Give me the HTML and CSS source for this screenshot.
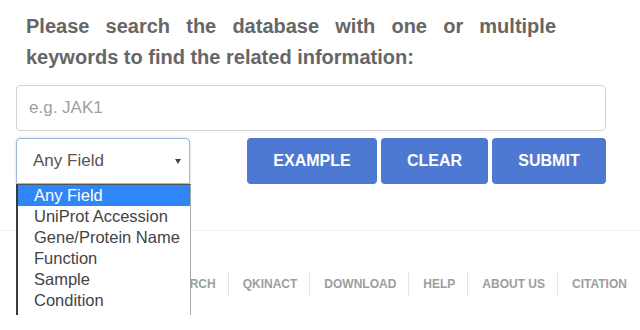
FILE: index.html
```html
<!DOCTYPE html>
<html lang="en">
<head>
<meta charset="utf-8">
<title>Search</title>
<link rel="stylesheet" href="styles.css">
</head>
<body>
<div class="panel">
  <p class="intro">Please search the database with one or multiple keywords to find the related information:</p>
  <input class="query" type="text" placeholder="e.g. JAK1">
  <div class="controls">
    <div class="select-wrap">
      <div class="select">Any Field<span class="caret"></span></div>
      <ul class="options">
        <li class="active">Any Field</li>
        <li>UniProt Accession</li>
        <li>Gene/Protein Name</li>
        <li>Function</li>
        <li>Sample</li>
        <li>Condition</li>
      </ul>
    </div>
    <div class="buttons">
      <button class="btn btn-example">EXAMPLE</button>
      <button class="btn btn-clear">CLEAR</button>
      <button class="btn btn-submit">SUBMIT</button>
    </div>
  </div>
</div>
<div class="footer">
  <nav class="nav">
    <a class="nav-item">HOME</a>
    <a class="nav-item">SEARCH</a>
    <a class="nav-item">QKINACT</a>
    <a class="nav-item">DOWNLOAD</a>
    <a class="nav-item">HELP</a>
    <a class="nav-item">ABOUT US</a>
    <a class="nav-item">CITATION</a>
  </nav>
</div>
</body>
</html>
```
FILE: styles.css
```css
html, body {
  margin: 0;
  padding: 0;
  background: #ffffff;
  overflow: hidden;
}
body {
  font-family: "Liberation Sans", Arial, sans-serif;
  width: 640px;
  height: 330px;
}
.panel {
  padding: 11px 34px 0 16px;
}
.intro {
  margin: 0 50px 0 10px;
  font-size: 20px;
  font-weight: bold;
  line-height: 31px;
  color: #666666;
  text-align: justify;
}
.query {
  display: block;
  box-sizing: border-box;
  width: 590px;
  height: 46px;
  margin-top: 12px;
  padding: 0 12px;
  border: 1px solid #d4d4d4;
  border-radius: 4px;
  font-family: "Liberation Sans", Arial, sans-serif;
  font-size: 17px;
  color: #555;
  outline: none;
}
.query::placeholder {
  color: #a0a0a0;
}
.controls {
  display: flex;
  margin-top: 7px;
}
.select-wrap {
  position: relative;
  width: 174px;
}
.select {
  box-sizing: border-box;
  height: 46px;
  padding-left: 16px;
  border: 1px solid #9fb6d6;
  border-radius: 4px 4px 0 0;
  box-shadow: 0 0 3px rgba(102, 140, 200, 0.35);
  font-size: 17px;
  line-height: 44px;
  color: #555555;
  display: flex;
  align-items: center;
  justify-content: space-between;
  padding-right: 8px;
}
.caret {
  width: 0;
  height: 0;
  border-left: 3px solid transparent;
  border-right: 3px solid transparent;
  border-top: 5px solid #444;
}
.options {
  position: absolute;
  top: 46px;
  left: 0;
  z-index: 5;
  box-sizing: border-box;
  width: 175px;
  margin: 0;
  padding: 0 0 4px 0;
  list-style: none;
  background: #ffffff;
  border-top: 1px solid #555;
  border-left: 2px solid #3a3a3a;
  border-right: 1px solid #a8a8a8;
}
.options li {
  height: 21px;
  line-height: 21px;
  padding-left: 16px;
  font-size: 16.5px;
  color: #444444;
  white-space: nowrap;
}
.options li.active {
  background: #2f86f6;
  color: #ffffff;
}
.buttons {
  display: flex;
  gap: 4px;
  margin-left: 57px;
}
.btn {
  height: 46px;
  border: none;
  border-radius: 4px;
  background: #4d79d2;
  color: #ffffff;
  font-family: "Liberation Sans", Arial, sans-serif;
  font-size: 16px;
  font-weight: bold;
  padding: 0;
}
.btn-example { width: 130px; }
.btn-clear { width: 107px; }
.btn-submit { width: 114px; }
.footer {
  margin-top: 46px;
  border-top: 1px solid #efefef;
  padding-top: 41px;
}
.nav {
  display: flex;
  padding-left: 88px;
  white-space: nowrap;
}
.nav-item {
  height: 24px;
  line-height: 24px;
  padding: 0 12px 0 14px;
  font-size: 12px;
  font-weight: bold;
  color: #9d9d9d;
  border-left: 1px solid #e6e6e6;
}
.nav-item:first-child {
  border-left: none;
}
```
